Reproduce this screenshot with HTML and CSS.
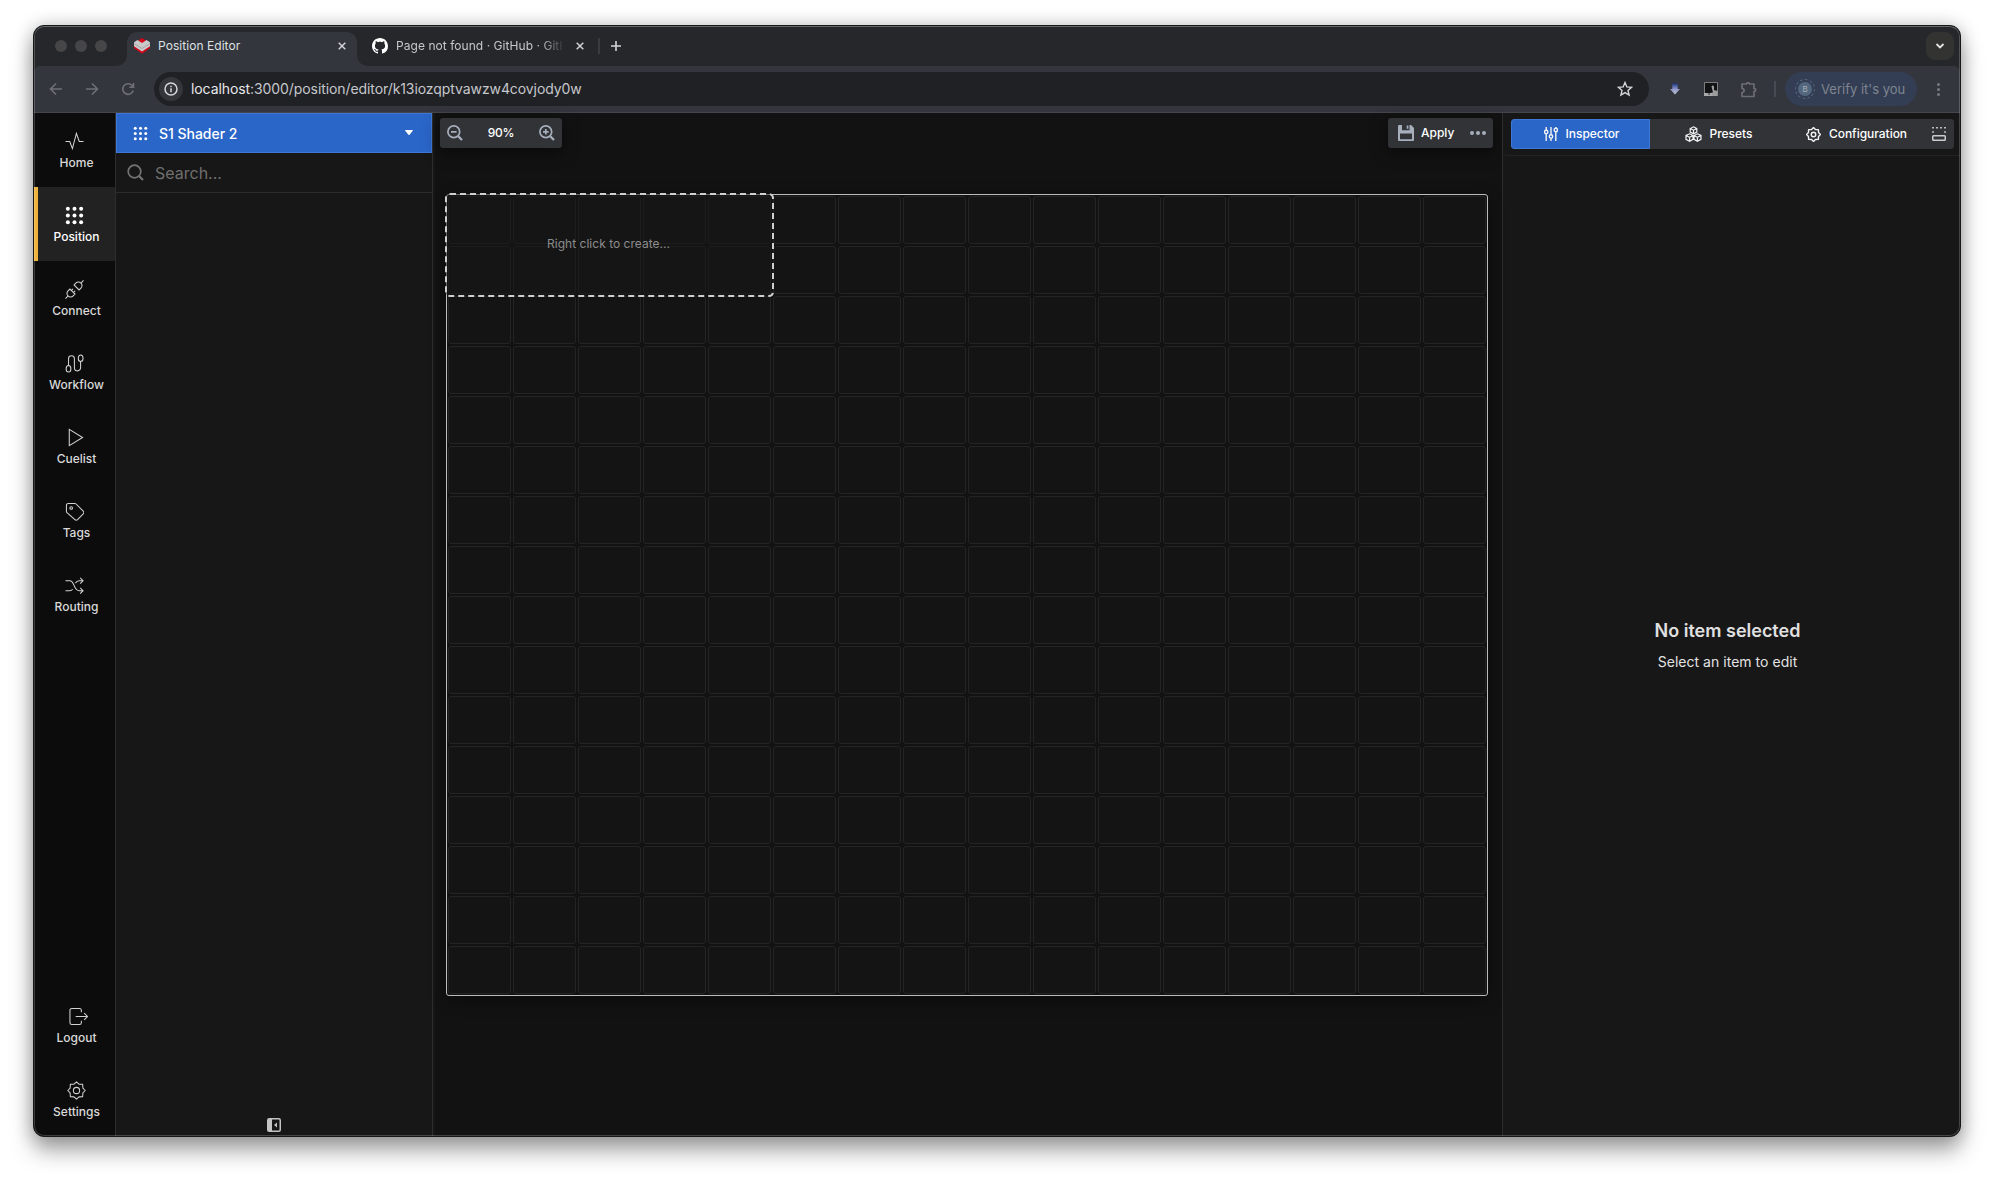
FILE: index.html
```html
<!DOCTYPE html>
<html lang="en">
<head>
<meta charset="utf-8">
<title>Position Editor</title>
<link rel="stylesheet" href="styles.css">
</head>
<body>
<div class="window">
  <header class="tabstrip">
    <div class="lights"><i></i><i></i><i></i></div>
    <div class="tab tab-active">
      <svg class="favicon" width="16" height="16" viewBox="0 0 16 16"><path d="M8 0 12 2.500 8 6 4 2.500z" fill="#d4061a"/><path d="M0 7.500V10l8 5.800 8-5.800V7.500l-8 5z" fill="#d4061a"/><path d="M0 4.200 3.500 2 8 5l4.500-3L16 4.200v4L8 13.500 0 8.200z" fill="#c9c9c9"/><path d="M0 5.500 8 10.500l8-5" stroke="#a5a5a5" fill="none"/></svg>
      <span class="tab-title">Position Editor</span>
      <svg class="close" width="8" height="8" viewBox="0 0 8 8"><path d="M.7.700 7.300 7.300M7.300.700.700 7.300"/></svg>
    </div>
    <div class="tab tab-idle">
      <svg width="16" height="16" viewBox="0 0 16 16" fill="#fff"><path d="M8 0C3.580 0 0 3.580 0 8c0 3.540 2.290 6.530 5.470 7.590.4.070.55-.17.55-.38 0-.19-.01-.82-.01-1.490-2.010.37-2.530-.49-2.690-.94-.09-.23-.48-.94-.82-1.130-.28-.15-.68-.52-.01-.53.63-.01 1.080.58 1.230.82.72 1.210 1.870.87 2.330.66.070-.52.28-.87.51-1.070-1.780-.2-3.640-.89-3.640-3.950 0-.87.31-1.590.82-2.150-.08-.2-.36-1.020.08-2.120 0 0 .67-.21 2.200.82.64-.18 1.320-.27 2-.27s1.360.09 2 .27c1.530-1.040 2.200-.82 2.200-.82.44 1.100.16 1.920.08 2.120.51.56.82 1.270.82 2.150 0 3.070-1.870 3.750-3.650 3.950.29.25.54.73.54 1.480 0 1.070-.01 1.930-.01 2.200 0 .21.15.46.55.38A8.010 8.010 0 0 0 16 8c0-4.420-3.580-8-8-8z"/></svg>
      <span class="tab-title fade">Page not found · GitHub · GitHub</span>
      <svg class="close" width="8" height="8" viewBox="0 0 8 8"><path d="M.7.700 7.300 7.300M7.300.700.700 7.300"/></svg>
    </div>
    <span class="tab-sep"></span>
    <svg class="plus" width="12" height="12" viewBox="0 0 12 12"><path d="M6 1v10M1 6h10"/></svg>
    <button class="tab-menu"><svg width="10" height="6" viewBox="0 0 10 6"><path d="m1.500 1 3.500 3.500L8.500 1" fill="none" stroke="#e3e3e3" stroke-width="1.800"/></svg></button>
  </header>

  <div class="toolbar">
    <div class="nav">
      <svg width="14" height="14" viewBox="0 0 14 14"><path d="M13 7H1.500M7 1.500 1.500 7 7 12.500"/></svg>
      <svg width="14" height="14" viewBox="0 0 14 14"><path d="M1 7h11.500M7 1.500 12.500 7 7 12.500"/></svg>
      <svg width="14" height="14" viewBox="0 0 14 14"><path d="M12.200 8.500A5.300 5.300 0 1 1 11 3.400l1.500 1.600M12.500 1v4.200H8.300"/></svg>
    </div>
    <div class="omnibox">
      <span class="info"><svg width="14" height="14" viewBox="0 0 14 14"><circle cx="7" cy="7" r="6" fill="none" stroke="#d5d6d9" stroke-width="1.500"/><path d="M7 6.300V10.300M7 3.700v1.500" stroke="#d5d6d9" stroke-width="1.500"/></svg></span>
      <span class="url"><b>localhost</b>:3000/position/editor/k13iozqptvawzw4covjody0w</span>
      <svg class="star" width="16" height="16" viewBox="0 0 16 16"><path d="m8 1.500 1.850 4.400 4.750.4-3.600 3.150 1.100 4.650L8 11.600l-4.100 2.500L5 9.450 1.400 6.300l4.750-.4z" fill="none" stroke="#d5d6d9" stroke-width="1.400"/></svg>
    </div>
    <div class="extensions">
      <svg width="12" height="12" viewBox="0 0 12 12"><defs><linearGradient id="down" x2="0" y2="1"><stop stop-color="#1c3484"/><stop offset=".5" stop-color="#8f97cc"/><stop offset="1" stop-color="#c0c2d0"/></linearGradient></defs><path d="M3.300.5h5.400v5.500H11L6 11.500 1 6h2.300z" fill="url(#down)"/></svg>
      <svg width="16" height="16" viewBox="0 0 16 16"><path d="M1.500 1.500h13v13h-13z" fill="#111214" stroke="#7d7e80"/><path d="M1 12h9v3H1z" fill="#aaa"/><path d="M5 13h2" stroke="#222"/><path d="M8.500 5.500c.5-1.500 2.500-1.500 2.500.5v3l3.500 1V15h-5l-1-3.500h1.500z" fill="#9c9c9c"/></svg>
      <svg width="17" height="17" viewBox="0 0 17 17"><path d="M2 3h4.500l.5-1.200h2L9.500 3H14v4.500l1.500.5v2l-1.500.5v5H2v-3.800L4 10.500v-2L2 7.200z" fill="none" stroke="#6c6e73" stroke-width="1.700" stroke-linejoin="round"/></svg>
    </div>
    <span class="bar"></span>
    <div class="profile">
      <span class="avatar"><em>B</em></span>
      <span>Verify it's you</span>
    </div>
    <div class="kebab"><i></i><i></i><i></i></div>
  </div>

  <main class="app">
    <nav class="sidebar">
      <a class="item"><svg viewBox="0 0 20 20"><path d="M.5 10H5l2.800 7.500L12 1.500l3 8.500h4.500"/></svg><span>Home</span></a>
      <a class="item current"><svg viewBox="0 0 20 20"><g fill="#fff" stroke="none"><circle cx="3" cy="3" r="2.100"/><circle cx="10" cy="3" r="2.100"/><circle cx="17" cy="3" r="2.100"/><circle cx="3" cy="10" r="2.100"/><circle cx="10" cy="10" r="2.100"/><circle cx="17" cy="10" r="2.100"/><circle cx="3" cy="17" r="2.100"/><circle cx="10" cy="17" r="2.100"/><circle cx="17" cy="17" r="2.100"/></g></svg><span>Position</span></a>
      <a class="item"><svg viewBox="0 0 20 20"><path d="m.5 19.500 2.500-2.500M19.500.5 17 3"/><path d="M3.200 11.400 5.200 9.500l5.300 5.300-1.900 2a3.800 3.800 0 0 1-5.400 0 3.800 3.800 0 0 1 0-5.400zM16.800 8.600l-2 1.900-5.300-5.300 1.900-2a3.800 3.800 0 0 1 5.400 0 3.800 3.800 0 0 1 0 5.400zM6.800 11l1.700-1.700M9 13.200l1.700-1.700"/></svg><span>Connect</span></a>
      <a class="item"><svg viewBox="0 0 20 20"><ellipse cx="3.700" cy="15.500" rx="2.500" ry="3.500"/><ellipse cx="16.500" cy="4.500" rx="2.500" ry="3.500"/><path d="M3.700 12V5a3 3 0 0 1 6.200 0v9.500a3.200 3.200 0 0 0 6.500 0V8"/></svg><span>Workflow</span></a>
      <a class="item"><svg viewBox="0 0 20 20"><path d="M4.500 1.500v17L18.500 10z"/></svg><span>Cuelist</span></a>
      <a class="item"><svg viewBox="0 0 20 20"><path d="M1.500 3.500a2 2 0 0 1 2-2h6.800a2 2 0 0 1 1.400.6l7.500 7.500a2 2 0 0 1 0 2.800l-6 6.200a2 2 0 0 1-2.800 0l-8.300-7.300a2 2 0 0 1-.6-1.400z"/><circle cx="6.500" cy="6.300" r="1.400"/></svg><span>Tags</span></a>
      <a class="item"><svg viewBox="0 0 20 20"><path d="M.5 5H5c5.500 0 3.500 10.500 10 10.500h4M.5 15.500H5q2 0 3-1.500M11 7.500Q12.500 5 15 5h4M16 2l3 3-3 3M16 12.500l3 3-3 3"/></svg><span>Routing</span></a>
      <span class="grow"></span>
      <a class="item logout"><svg viewBox="0 0 20 20"><path d="M13 5.500V3.500a2 2 0 0 0-2-2H3a2 2 0 0 0-2 2v13a2 2 0 0 0 2 2h8a2 2 0 0 0 2-2v-2M7 10h12.500M16 6.500l3.500 3.500-3.500 3.500"/></svg><span>Logout</span></a>
      <a class="item settings"><svg viewBox="0 0 20 20"><path d="m10 .8 2.600 2.500 3.900.2.200 3.900L19.200 10l-2.500 2.600-.2 3.900-3.900.2L10 19.200l-2.600-2.500-3.900-.2-.2-3.900L.8 10l2.500-2.600.2-3.900 3.900-.2z" stroke-linejoin="round"/><circle cx="10" cy="10" r="3.300"/></svg><span>Settings</span></a>
    </nav>

    <section class="list">
      <div class="picker">
        <svg width="15" height="15" viewBox="0 0 20 20" fill="#fff"><circle cx="3" cy="3" r="2"/><circle cx="10" cy="3" r="2"/><circle cx="17" cy="3" r="2"/><circle cx="3" cy="10" r="2"/><circle cx="10" cy="10" r="2"/><circle cx="17" cy="10" r="2"/><circle cx="3" cy="17" r="2"/><circle cx="10" cy="17" r="2"/><circle cx="17" cy="17" r="2"/></svg>
        <span>S1 Shader 2</span>
        <svg width="10" height="6" viewBox="0 0 10 6"><path d="M1.500.5h7L5 4.800z" fill="#fff" stroke="#fff" stroke-linejoin="round"/></svg>
      </div>
      <div class="search">
        <svg width="17" height="17" viewBox="0 0 17 17"><circle cx="7.500" cy="7.500" r="6.300"/><path d="m12 12 4 4" stroke-width="2.200"/></svg>
        <span>Search...</span>
      </div>
      <span class="grow"></span>
      <svg class="collapse" width="14" height="14" viewBox="0 0 14 14"><rect x=".75" y=".75" width="12.500" height="12.500" rx="1.500" fill="none" stroke="#c4c4c4" stroke-width="1.500"/><path d="M1 1h4v12H1z" fill="#c4c4c4"/><path d="m10 4.500-3 2.500 3 2.500z" fill="#c4c4c4"/></svg>
    </section>

    <section class="stage">
      <div class="stage-bar">
        <div class="float zoomer">
          <svg width="16" height="16" viewBox="0 0 16 16"><circle cx="6.800" cy="6.800" r="5.900"/><path d="M4 6.800h5.600"/><path d="m11.300 11.300 3.700 3.700" stroke-width="2.300"/></svg>
          <span>90%</span>
          <svg width="16" height="16" viewBox="0 0 16 16"><circle cx="6.800" cy="6.800" r="5.900"/><path d="M4 6.800h5.600M6.800 4v5.600"/><path d="m11.300 11.300 3.700 3.700" stroke-width="2.300"/></svg>
        </div>
        <div class="float apply">
          <svg width="16" height="16" viewBox="0 0 16 16"><path d="M1.500 0H4v5.300h7.500V0h1.600L16 2.900V15a1 1 0 0 1-1 1H1a1 1 0 0 1-1-1V1.200A1.300 1.300 0 0 1 1.500 0zM2 8.500v5.700h12V8.500z" fill="#a7afbd" fill-rule="evenodd"/><path d="M8.700.5h1.700v3.300H8.700z" fill="#a7afbd"/></svg>
          <span>Apply</span>
          <b class="more"><i></i><i></i><i></i></b>
        </div>
      </div>
      <div class="board">
        <div class="cells" id="cells"></div>
        <div class="drop">
          <svg width="329" height="104" viewBox="0 0 329 104"><rect x="1" y="1" width="327" height="102" rx="4"/></svg>
          <span>Right click to create...</span>
        </div>
      </div>
    </section>

    <aside class="inspector">
      <div class="tabs-row">
        <div class="tabs">
          <div class="seg on"><svg width="14" height="14" viewBox="0 0 14 14"><path d="M2.200 0v3M2.200 7v7M7 0v7.500M7 11.500V14M11.800 0v1M11.800 5v9"/><circle cx="2.200" cy="5" r="1.700"/><circle cx="7" cy="9.500" r="1.700"/><circle cx="11.800" cy="3" r="1.700"/></svg><span>Inspector</span></div>
          <div class="seg presets"><svg width="17" height="16" viewBox="0 0 17 16"><path d="m8.500.8 3.300 1.700v3.600L8.500 7.800 5.200 6.100V2.500zM5.200 2.500l3.300 1.700 3.300-1.700M8.500 4.200v3.600M4.600 7.800l3.400 1.700v3.800l-3.400 1.900-3.600-1.900V9.500zM1 9.500l3.600 1.800L8 9.500M4.600 11.300v3.900M12.400 7.800 16 9.500v3.800l-3.600 1.900L9 13.300V9.500zM9 9.500l3.400 1.800L16 9.500M12.400 11.300v3.900"/></svg><span>Presets</span></div>
          <div class="seg config"><svg width="15" height="15" viewBox="0 0 20 20"><path d="m10 .8 2.600 2.500 3.900.2.200 3.900L19.200 10l-2.500 2.600-.2 3.900-3.900.2L10 19.200l-2.600-2.500-3.900-.2-.2-3.900L.8 10l2.500-2.600.2-3.900 3.900-.2z" stroke-width="1.900" stroke-linejoin="round"/><circle cx="10" cy="10" r="3" stroke-width="1.900"/></svg><span>Configuration</span></div>
          <svg class="dock" width="14" height="14" viewBox="0 0 14 14"><rect x=".75" y="8.700" width="12.500" height="4.500" rx=".8" fill="none" stroke="#ccc" stroke-width="1.500"/><path d="M0 .8h2m2 0h2m2 0h2m2 0h2M0 5h2m10 0h2" stroke="#bbb" stroke-width="1.400"/></svg>
        </div>
      </div>
      <div class="empty">
        <h2>No item selected</h2>
        <p>Select an item to edit</p>
      </div>
    </aside>
  </main>
</div>
<script src="board.js"></script>
</body>
</html>
```
FILE: board.js
```js
// Fill the 16 x 16 position board with empty cells.
const cells = document.getElementById('cells');
for (let i = 0; i < 256; i++) {
  cells.appendChild(document.createElement('i'));
}
```
FILE: styles.css
```css
* { box-sizing: border-box; }
body {
  margin: 0;
  padding: 25px 33px 41px;
  height: 1178px;
  overflow: hidden;
  background: #fff;
  color: #d9d9d9;
  font-family: Inter, "Liberation Sans", sans-serif;
  font-size: 12px;
}
svg { display: block; flex: none; }
.grow { flex: 1; }

.window {
  display: flex;
  flex-direction: column;
  height: 1112px;
  overflow: hidden;
  border: 1px solid #161719;
  border-radius: 11px;
  background: #26272a;
  box-shadow: 0 14px 22px rgba(0, 0, 0, .34), 0 0 18px rgba(0, 0, 0, .22);
  position: relative;
}
/* Light hairline inside the window edge */
.window::after {
  content: "";
  position: absolute;
  inset: 0;
  border: 1px solid rgba(255, 255, 255, .2);
  border-top-color: rgba(255, 255, 255, .3);
  border-radius: 10px;
  pointer-events: none;
}

/* Tab strip */
.tabstrip { display: flex; align-items: center; height: 40px; padding-left: 21px; }
.lights { display: flex; gap: 8px; }
.lights i { width: 12px; height: 12px; border-radius: 50%; background: #464649; }
.tab { display: flex; align-items: center; color: #dfe0e3; }
.tab-active {
  position: relative;
  align-self: flex-end;
  width: 230px;
  height: 34px;
  margin-left: 20px;
  padding: 0 11px 6px 7px;
  border-radius: 10px 10px 0 0;
  background: #33363d;
}
.tab-active::before, .tab-active::after {
  content: "";
  position: absolute;
  bottom: 0;
  width: 10px;
  height: 10px;
}
.tab-active::before { left: -10px; background: radial-gradient(circle at 0 0, transparent 9.500px, #33363d 10px); }
.tab-active::after { right: -10px; background: radial-gradient(circle at 100% 0, transparent 9.500px, #33363d 10px); }
.tab-title { flex: 1; margin-left: 8px; line-height: 16px; letter-spacing: .05px; white-space: nowrap; }
.close { fill: none; stroke: #d0d1d4; stroke-width: 1.500; }
.tab-idle { width: 227px; padding-left: 15px; color: #c5c7cf; }
.tab-idle .fade {
  flex: none;
  width: 166px;
  overflow: hidden;
  -webkit-mask-image: linear-gradient(90deg, #000 145px, transparent 169px);
  mask-image: linear-gradient(90deg, #000 145px, transparent 169px);
}
.tab-idle .close { margin-left: 14px; }
.tab-sep { width: 2px; height: 16px; margin-left: 14px; background: #3b3c40; }
.plus { margin-left: 10px; stroke: #d5d6d9; stroke-width: 1.600; }
.tab-menu {
  display: grid;
  place-items: center;
  width: 28px;
  height: 28px;
  margin: 0 6px 0 auto;
  padding: 0;
  border: 0;
  border-radius: 9px;
  background: #333332;
}

/* Toolbar */
.toolbar {
  display: flex;
  align-items: center;
  height: 47px;
  border-bottom: 1px solid #44464b;
  border-radius: 6px 6px 0 0;
  background: #33363d;
  flex: none;
}
.nav { display: flex; gap: 22px; margin-left: 15px; fill: none; stroke: #6e7076; stroke-width: 1.600; }
.omnibox {
  display: flex;
  align-items: center;
  width: 1495px;
  height: 34px;
  margin-left: 19px;
  padding: 0 16px 0 5px;
  border-radius: 17px;
  background: #202125;
}
.info { display: grid; place-items: center; width: 24px; height: 24px; border-radius: 50%; background: #34363c; }
.url { flex: 1; margin: -2px 0 0 8px; font-size: 14px; letter-spacing: -.085px; color: #c6c7cb; }
.url b { font-weight: 400; color: #e7e8ea; }
.extensions { display: flex; align-items: center; gap: 21px; margin-left: 20px; }
.extensions svg:first-child { margin-right: 1px; }
.bar { width: 2px; height: 16px; margin-left: 17px; background: #484b53; }
.profile {
  display: flex;
  align-items: center;
  gap: 6px;
  width: 132px;
  height: 34px;
  margin-left: 9px;
  padding-left: 10px;
  border-radius: 17px;
  background: #333e54;
  color: #7f8590;
  font-size: 13px;
}
.avatar { display: grid; place-items: center; width: 20px; height: 20px; border: 1px dashed #5a6a80; border-radius: 50%; }
.avatar em { width: 14px; height: 14px; border-radius: 50%; background: #53677e; color: #a8b1bc; font: 8px/14px Inter, sans-serif; text-align: center; }
.kebab { display: grid; gap: 2px; margin-left: 20px; }
.kebab i { width: 3px; height: 3px; border-radius: 50%; background: #77797f; }

/* Application */
.app { display: flex; flex: 1; min-height: 0; background: #121212; }
.sidebar { display: flex; flex-direction: column; width: 82px; border-right: 1px solid #2d2d2d; background: #0c0c0c; }
.item {
  display: flex;
  flex-direction: column;
  align-items: center;
  height: 74px;
  padding: 19px 0 0 4px;
  font-weight: 500;
  line-height: 16px;
}
.item svg { width: 19px; height: 19px; margin: 0 4px 4px 0; fill: none; stroke: #d2d2d2; stroke-width: 1.100; }
.item.current { padding-left: 0; border-left: 4px solid #edb33c; background: #222; color: #fff; }
.item.logout svg { margin-right: -4px; }
.item.settings svg { margin-right: 0; }

.list { display: flex; flex-direction: column; width: 317px; border-right: 1px solid #2d2d2d; background: #171717; }
.picker {
  display: flex;
  align-items: center;
  gap: 11px;
  height: 40px;
  padding: 0 17px 0 16px;
  border: 1px solid #3d78d6;
  background: #2a65c8;
  color: #fff;
  font-size: 14px;
  font-weight: 500;
  letter-spacing: -.03px;
}
.picker span { flex: 1; }
.search { display: flex; align-items: center; gap: 11px; height: 40px; padding-left: 11px; border-bottom: 1px solid #2b2b2b; color: #6f6f6f; font-size: 16px; }
.search svg { fill: none; stroke: #747474; stroke-width: 1.700; }
.collapse { margin: 0 0 4px 151px; }

.stage { width: 1069px; border-left: 2px solid #171717; }
.stage-bar { display: flex; justify-content: space-between; padding: 5px 9px 0 5px; }
.float { display: flex; align-items: center; height: 30px; border-radius: 3px; background: #323337; color: #fff; font-weight: 500; box-shadow: 0 4px 16px rgba(0, 0, 0, .5); }
.zoomer { justify-content: space-between; width: 122px; padding: 0 7px; }
.zoomer svg { fill: none; stroke: #a7afbd; stroke-width: 1.700; }
.zoomer span { margin-top: -1px; letter-spacing: -.2px; }
.apply { width: 105px; padding: 0 7px 0 10px; }
.apply span { flex: 1; margin: -1px 0 0 7px; }
.more { display: flex; gap: 2px; }
.more i { width: 4px; height: 4px; border-radius: 50%; background: #a7afbd; }

.board {
  position: relative;
  width: 1042px;
  height: 802px;
  margin: 46px 0 0 11px;
  padding: 1px;
  border: 1px solid #bdbdbd;
  border-radius: 3px;
  box-shadow: 0 4px 16px rgba(0, 0, 0, .4);
}
.cells { display: grid; grid-template-columns: repeat(16, 63px); grid-auto-rows: 48px; gap: 2px; }
.cells i { border: 1px solid #242424; border-radius: 3px; background: #141414; }
.drop {
  position: absolute;
  left: -2px;
  top: -2px;
  display: grid;
  place-items: center;
  width: 329px;
  height: 104px;
  color: #8c8c8c;
  line-height: 16px;
}
.drop > * { grid-area: 1 / 1; }
.drop span { margin: -2px 2px 0 0; letter-spacing: .02px; }
.drop rect { fill: rgba(22, 22, 22, .5); stroke: #d0d0d0; stroke-width: 2; stroke-dasharray: 6 4; }

.inspector { display: flex; flex-direction: column; flex: 1; border-left: 1px solid #2d2d2d; background: #171717; }
.tabs-row { height: 43px; margin-left: 2px; padding: 6px 6px 0; border-bottom: 1px solid #222; }
.tabs { display: flex; align-items: center; width: 443px; height: 30px; border-radius: 3px; background: #323337; overflow: hidden; color: #fff; font-weight: 500; }
.seg { display: flex; align-items: center; justify-content: center; gap: 8px; height: 30px; fill: none; }
.seg span { margin-top: -1px; letter-spacing: -.03px; }
.seg svg { stroke: #f2f2f2; stroke-width: 1.400; }
.seg.presets svg { stroke-width: 1.200; }
.seg.on { width: 139px; padding-left: 2px; border: 1px solid #3d78d6; border-radius: 3px 0 0 3px; background: #2a65c8; }
.seg.presets { width: 137px; }
.seg.config { width: 139px; }
.dock { margin-left: 6px; }
.empty { display: flex; flex: 1; flex-direction: column; align-items: center; justify-content: center; padding-right: 8px; }
.empty h2 { margin: 0; font-size: 18px; line-height: 24px; font-weight: 600; color: #e0e0e0; }
.empty p { margin: 9px 0 1px; font-size: 14px; line-height: 20px; letter-spacing: .03px; color: #e2e2e2; }
```
